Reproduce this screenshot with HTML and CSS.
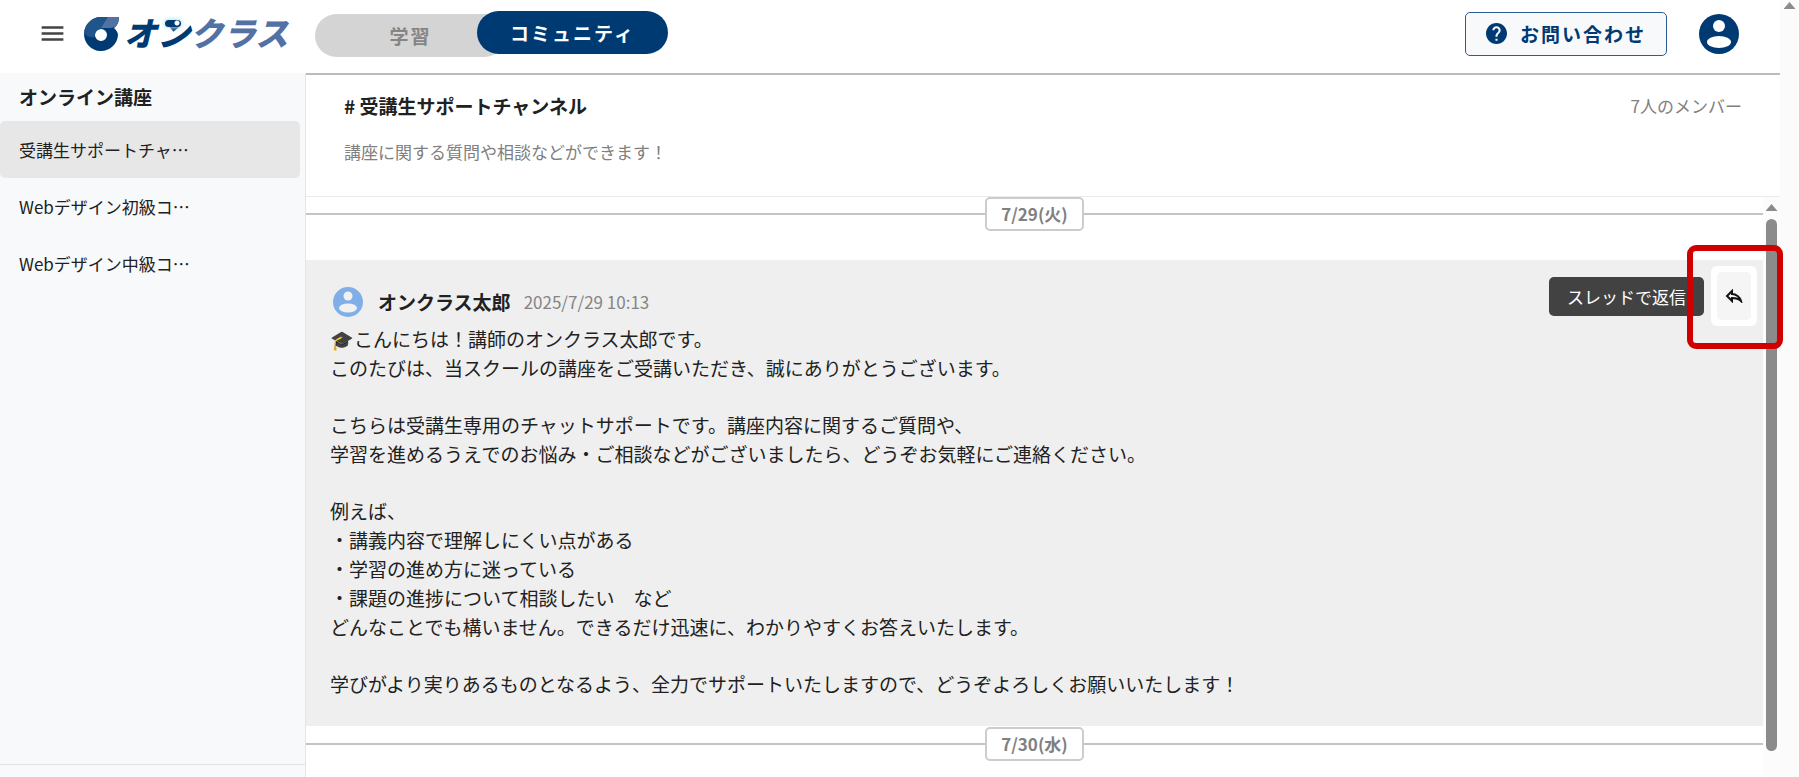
FILE: index.html
```
<!DOCTYPE html>
<html lang="ja">
  <head>
    <meta charset="UTF-8" />
    <title>オンクラス</title>
    <link rel="stylesheet" href="styles.css">
  </head>

  <body>
    <div class="app">
      <header class="header">
        <button class="menu-button" aria-label="メニュー">
          <svg viewBox="0 0 24 24"><path d="M3 18h18v-2H3v2zm0-5h18v-2H3v2zm0-7v2h18V6H3z" /></svg>
        </button>
        <a class="logo" href="#">
          <svg class="logo-mark" viewBox="0 0 36 36">
            <path fill="#003a73" fill-rule="evenodd" d="M18 1h18c0 5-2 9-5 11 2 2 4 4 4 7a17 17 0 1 1-17-18zm0 12a6 6 0 1 0 0 12 6 6 0 0 0 0-12z" />
            <path fill="#1f558b" d="M18 1h8l-8 12c-4 0-7 4-6 8C7 22 3 20 1 17 2 8 9 1 18 1z" />
            <path fill="#5272a6" d="M25 1h11c0 7-3 11-9 11h-9z" />
          </svg>
          <span class="logo-text">オ<span class="logo-n">ン</span><span class="logo-light">クラス</span></span>
        </a>
        <nav class="tabs">
          <button class="tab">学習</button>
          <button class="tab tab-active">コミュニティ</button>
        </nav>
        <button class="contact">
          <svg viewBox="2 2 20 20"><path d="M12 2C6.48 2 2 6.48 2 12s4.48 10 10 10 10-4.48 10-10S17.52 2 12 2zm1 17h-2v-2h2v2zm2.07-7.75l-.9.92C13.45 12.9 13 13.5 13 15h-2v-.5c0-1.1.45-2.1 1.17-2.83l1.24-1.26c.37-.36.59-.86.59-1.41 0-1.1-.9-2-2-2s-2 .9-2 2H8c0-2.21 1.79-4 4-4s4 1.79 4 4c0 .88-.36 1.68-.93 2.25z" /></svg>
          お問い合わせ
        </button>
        <button class="account" aria-label="アカウント">
          <svg viewBox="0 0 40 40">
            <circle cx="20" cy="20" r="20" />
            <circle cx="20" cy="12" r="6" fill="#fff" />
            <ellipse cx="20" cy="28" rx="12" ry="6" fill="#fff" />
          </svg>
        </button>
      </header>

      <aside class="sidebar">
        <h2>オンライン講座</h2>
        <nav class="channels">
          <a class="channel channel-active" href="#">受講生サポートチャ…</a>
          <a class="channel" href="#">Webデザイン初級コ…</a>
          <a class="channel" href="#">Webデザイン中級コ…</a>
        </nav>
        <div class="sidebar-footer"></div>
      </aside>

      <main class="main">
        <div class="channel-header">
          <div class="channel-title">
            <h1># 受講生サポートチャンネル</h1>
            <span>7人のメンバー</span>
          </div>
          <p>講座に関する質問や相談などができます！</p>
        </div>

        <div class="timeline">
          <div class="messages">
            <div class="date-divider"><span>7/29(火)</span></div>

            <article class="message">
              <div class="message-head">
                <svg class="avatar" viewBox="0 0 40 40">
                  <circle cx="20" cy="20" r="20" fill="#7faee9" />
                  <circle cx="20" cy="12" r="6" fill="#f1f1f1" />
                  <ellipse cx="20" cy="28" rx="12" ry="6" fill="#f1f1f1" />
                </svg>
                <strong>オンクラス太郎</strong>
                <time>2025/7/29 10:13</time>
              </div>
              <div class="message-body">
                <p>🎓こんにちは！講師のオンクラス太郎です。<br>このたびは、当スクールの講座をご受講いただき、誠にありがとうございます。</p>
                <p>こちらは受講生専用のチャットサポートです。講座内容に関するご質問や、<br>学習を進めるうえでのお悩み・ご相談などがございましたら、どうぞお気軽にご連絡ください。</p>
                <p>例えば、<br>・講義内容で理解しにくい点がある<br>・学習の進め方に迷っている<br>・課題の進捗について相談したい　など<br>どんなことでも構いません。できるだけ迅速に、わかりやすくお答えいたします。</p>
                <p>学びがより実りあるものとなるよう、全力でサポートいたしますので、どうぞよろしくお願いいたします！</p>
              </div>
              <div class="message-actions">
                <div class="tooltip" role="tooltip">スレッドで返信</div>
                <div class="action-box">
                  <button class="reply" aria-label="スレッドで返信">
                    <svg viewBox="0 0 18 14"><path d="M7 2v3c4 0 8 3 9 7-2-2-5-3-9-3v3L2 7z" /></svg>
                  </button>
                </div>
              </div>
              <div class="highlight"></div>
            </article>

            <div class="date-divider"><span>7/30(水)</span></div>
          </div>
          <div class="scrollbar">
            <div class="scroll-arrow"></div>
            <div class="scroll-thumb"></div>
          </div>
        </div>
      </main>

      <div class="page-scrollbar">
        <div class="scroll-arrow"></div>
      </div>
    </div>
  </body>
</html>
```
FILE: styles.css
```
* {
  margin: 0;
  padding: 0;
  box-sizing: border-box;
}

body {
  font-family: "Noto Sans CJK JP", sans-serif;
  font-size: 17px;
  color: #212121;
  background-color: #fff;
}

button {
  font-family: inherit;
  border: none;
  background: none;
  cursor: pointer;
}

a {
  color: inherit;
  text-decoration: none;
}

svg {
  display: block;
}

.app {
  height: 100vh;
  display: grid;
  grid-template-columns: 306px 1fr 19px;
  grid-template-rows: 73px 1fr;
  overflow: hidden;
}

/* header */
.header {
  grid-column: 1 / 3;
  display: flex;
  align-items: center;
  padding: 0 41px 6px 38px;
}

.menu-button svg {
  width: 29px;
  height: 29px;
  fill: #444;
}

.logo {
  display: flex;
  align-items: center;
  margin-left: 16px;
  height: 40px;
}

.logo-mark {
  width: 36px;
  height: 36px;
}

.logo-text {
  margin-left: 5px;
  padding-bottom: 4px;
  width: 173px;
  font-size: 33px;
  font-weight: 900;
  font-style: italic;
  line-height: 36px;
  white-space: nowrap;
  color: #003a73;
}

.logo-n {
  position: relative;
}

.logo-n::before {
  content: "";
  position: absolute;
  top: 12px;
  left: 8px;
  width: 16px;
  height: 7px;
  border-radius: 4px;
  background: radial-gradient(circle at 12px 3px, #fff 2px, #003a73 3px);
  box-shadow: 0 0 4px 1px #b5e6e6;
}

.logo-light {
  color: #5272a6;
}

.tabs {
  display: flex;
  margin-left: 18px;
}

.tab {
  width: 191px;
  height: 43px;
  margin-top: 3px;
  border-radius: 22px;
  background-color: #d4d4d4;
  color: #858585;
  font-size: 19px;
  font-weight: bold;
  letter-spacing: 2px;
}

.tab-active {
  position: relative;
  margin: 0 0 3px -29px;
  background-color: #003a73;
  color: #fff;
}

.contact {
  display: flex;
  align-items: center;
  justify-content: center;
  gap: 13px;
  width: 202px;
  height: 44px;
  margin-left: auto;
  border: 1px solid #2b5c92;
  border-radius: 5px;
  background-color: #f8f9fb;
  color: #003a73;
  font-size: 19px;
  font-weight: bold;
  letter-spacing: 2px;
}

.contact svg {
  width: 21px;
  height: 21px;
  fill: #003a73;
}

.account {
  margin-left: 32px;
}

.account svg {
  width: 40px;
  height: 40px;
  fill: #003a73;
}

/* sidebar */
.sidebar {
  display: flex;
  flex-direction: column;
  border-right: 1px solid #e4e5e7;
  background-color: #f8f9fb;
}

.sidebar h2 {
  padding: 10px 19px;
  font-size: 19px;
  line-height: 28px;
}

.channel {
  display: block;
  height: 57px;
  margin-right: 5px;
  padding: 0 19px;
  border-radius: 5px;
  line-height: 57px;
}

.channel-active {
  background-color: #e7e7e7;
}

.sidebar-footer {
  height: 13px;
  margin-top: auto;
  border-top: 1px solid #e4e4e4;
}

/* channel */
.main {
  display: flex;
  flex-direction: column;
  min-width: 0;
  min-height: 0;
}

.channel-header {
  height: 124px;
  flex: none;
  padding: 17px 38px 0;
  border-top: 2px solid #bbb;
  border-bottom: 1px solid #ebebeb;
  color: #808080;
}

.channel-title {
  display: flex;
  align-items: center;
  justify-content: space-between;
  line-height: 28px;
}

.channel-title h1 {
  font-size: 19px;
  color: #212121;
}

.channel-header p {
  margin-top: 18px;
  line-height: 28px;
}

.timeline {
  flex: 1;
  display: flex;
  min-height: 0;
}

.messages {
  flex: 1;
  min-width: 0;
}

.date-divider {
  display: flex;
  align-items: center;
  height: 34px;
}

.date-divider::before,
.date-divider::after {
  content: "";
  flex: 1;
  height: 2px;
  background-color: #c4c4c4;
}

.date-divider span {
  width: 99px;
  height: 34px;
  border: 2px solid #ccc;
  border-radius: 5px;
  color: #808080;
  font-weight: bold;
  line-height: 30px;
  text-align: center;
}

.message {
  position: relative;
  margin: 29px 0 1px;
  padding: 26px 24px 28px;
  background-color: #efefef;
}

.message-head {
  display: flex;
  align-items: center;
  height: 31px;
}

.avatar {
  width: 30px;
  height: 30px;
  margin: 0 15px 0 3px;
}

.message-head strong {
  margin-right: 13px;
  font-size: 19px;
}

.message-head time {
  color: #858585;
}

.message-body {
  margin-top: 7px;
  font-size: 19px;
  line-height: 29px;
}

.message-body p + p {
  margin-top: 28px;
}

.message-actions {
  position: absolute;
  top: 6px;
  right: 6px;
  display: flex;
  align-items: center;
  gap: 7px;
}

.tooltip {
  padding: 0 18px;
  border-radius: 5px;
  background-color: #424242;
  color: #fff;
  line-height: 39px;
}

.action-box {
  padding: 6px;
  border-radius: 6px;
  background-color: #fff;
}

.reply {
  display: flex;
  align-items: center;
  justify-content: center;
  width: 34px;
  height: 48px;
  border-radius: 5px;
  background-color: #f5f5f5;
}

.reply svg {
  width: 18px;
  height: 14px;
  fill: none;
  stroke: #111;
  stroke-width: 2;
}

.highlight {
  position: absolute;
  top: -15px;
  right: -20px;
  width: 96px;
  height: 104px;
  border: 6px solid #d00000;
  border-radius: 9px;
  pointer-events: none;
}

/* scrollbars */
.scrollbar {
  display: flex;
  flex-direction: column;
  align-items: center;
  width: 17px;
  padding: 7px 0 26px;
  background-color: #fcfcfc;
}

.page-scrollbar {
  grid-column: 3;
  grid-row: 1 / 3;
  display: flex;
  justify-content: center;
  padding-top: 2px;
  background-color: #fbfbfb;
}

.scroll-arrow {
  width: 12px;
  height: 7px;
  background-color: #8b8b8b;
  clip-path: polygon(50% 0, 100% 100%, 0 100%);
}

.scroll-thumb {
  flex: 1;
  width: 11px;
  margin-top: 8px;
  border-radius: 6px;
  background-color: #8b8b8b;
}
```
